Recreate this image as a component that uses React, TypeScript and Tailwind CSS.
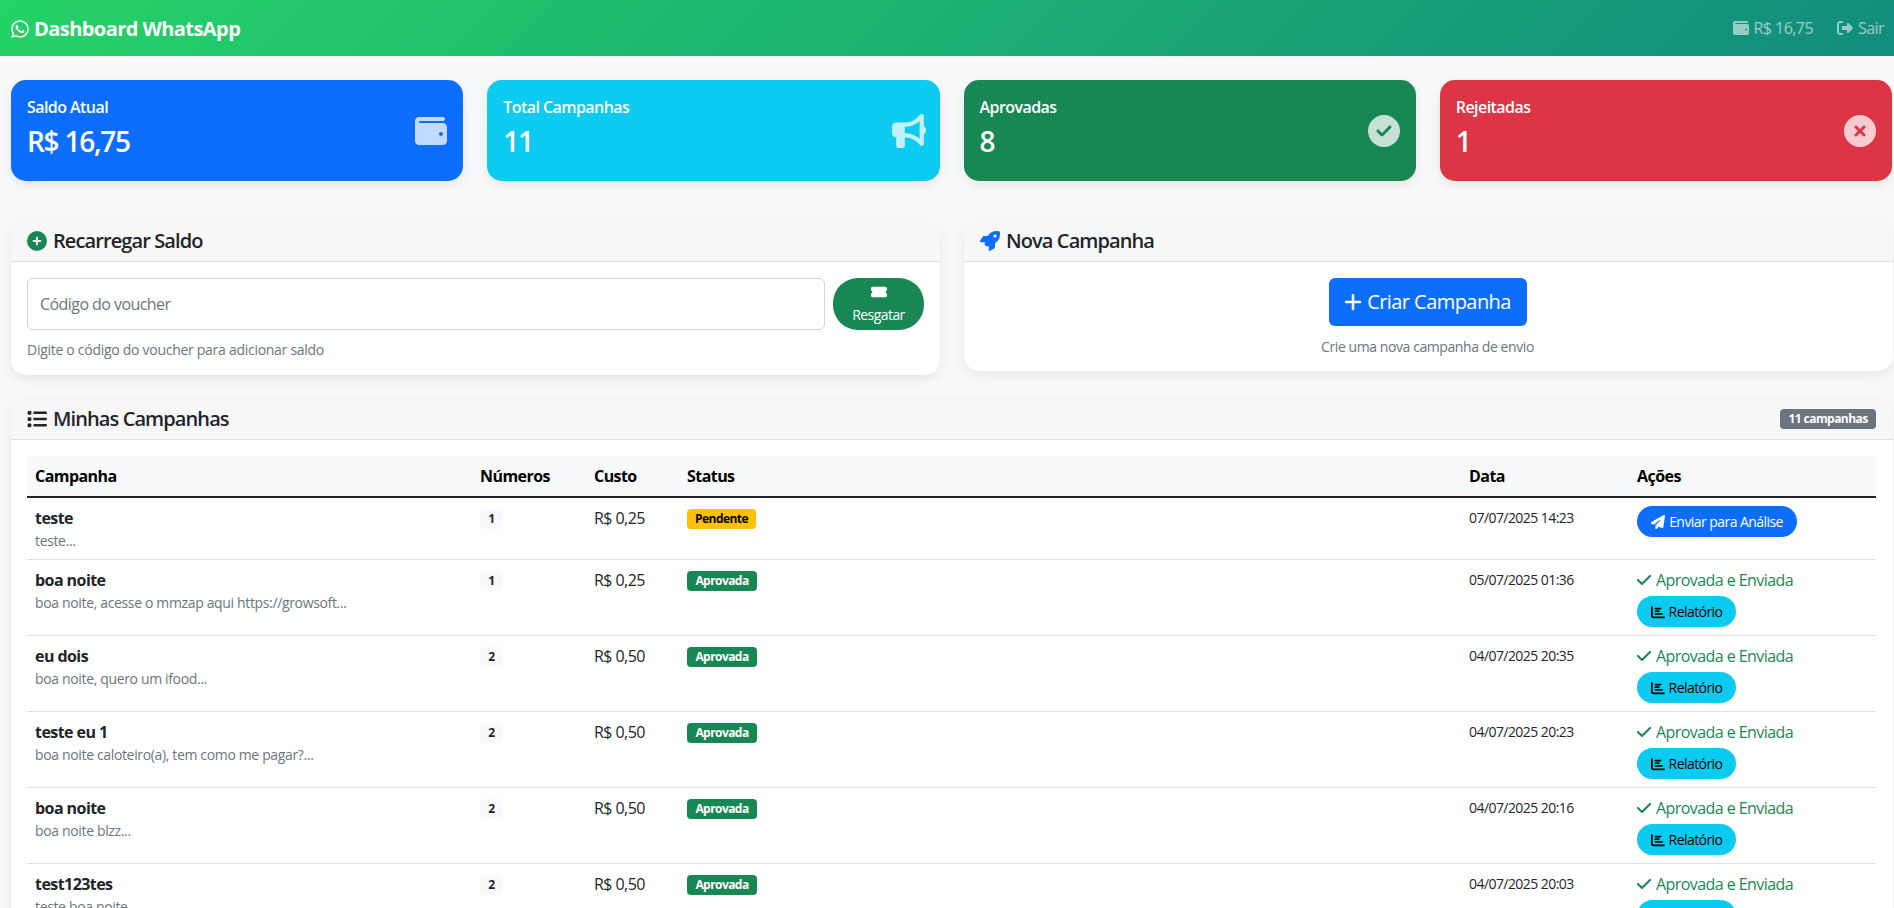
import {
    FaBullhorn,
    FaChartBar,
    FaCheck,
    FaCircleCheck,
    FaCirclePlus,
    FaCircleXmark,
    FaList,
    FaPaperPlane,
    FaPlus,
    FaRightFromBracket,
    FaRocket,
    FaTicketSimple,
    FaWallet,
    FaWhatsapp,
} from 'react-icons/fa6';

const stats = [
    { label: 'Saldo Atual', value: 'R$ 16,75', icon: FaWallet, bg: 'bg-[#0d6efd]', size: 'w-8 h-8' },
    { label: 'Total Campanhas', value: '11', icon: FaBullhorn, bg: 'bg-[#0dcaf0]', size: 'w-[34px] h-[34px] -mr-[2px]' },
    { label: 'Aprovadas', value: '8', icon: FaCircleCheck, bg: 'bg-[#198754]', size: 'w-8 h-8' },
    { label: 'Rejeitadas', value: '1', icon: FaCircleXmark, bg: 'bg-[#dc3545]', size: 'w-8 h-8' },
];

const campaigns = [
    { name: 'teste', text: 'teste...', count: 1, cost: 'R$ 0,25', pending: true, date: '07/07/2025 14:23' },
    { name: 'boa noite', text: 'boa noite, acesse o mmzap aqui https://growsoft...', count: 1, cost: 'R$ 0,25', pending: false, date: '05/07/2025 01:36' },
    { name: 'eu dois', text: 'boa noite, quero um ifood...', count: 2, cost: 'R$ 0,50', pending: false, date: '04/07/2025 20:35' },
    { name: 'teste eu 1', text: 'boa noite caloteiro(a), tem como me pagar?...', count: 2, cost: 'R$ 0,50', pending: false, date: '04/07/2025 20:23' },
    { name: 'boa noite', text: 'boa noite blzz...', count: 2, cost: 'R$ 0,50', pending: false, date: '04/07/2025 20:16' },
    { name: 'test123tes', text: 'teste boa noite...', count: 2, cost: 'R$ 0,50', pending: false, date: '04/07/2025 20:03' },
];

const headers = [
    { label: 'Campanha', width: 'w-[445px]' },
    { label: 'Números', width: 'w-[114px]' },
    { label: 'Custo', width: 'w-[93px]' },
    { label: 'Status', width: 'w-[782px]' },
    { label: 'Data', width: 'w-[168px]' },
    { label: 'Ações', width: 'w-[247px]' },
];

export default function App() {
    return (
        <div className="h-[908px] overflow-hidden bg-[#f8f9fa] text-[#212529] text-base leading-6 font-['Open_Sans',sans-serif] tracking-[-0.035em]">
            <nav className="h-14 flex items-center justify-between pl-[11px] pr-[10px] bg-[linear-gradient(135deg,#25d366,#128c7e)]">
                <div className="mt-px flex items-center gap-[5px] text-white text-xl font-bold">
                    <FaWhatsapp className="w-[18px] h-5" />
                    Dashboard WhatsApp
                </div>
                <div className="flex items-center gap-6 text-white/55">
                    <span className="flex items-center gap-[5px]">
                        <FaWallet className="w-4 h-4" />
                        R$ 16,75
                    </span>
                    <span className="flex items-center gap-[5px]">
                        <FaRightFromBracket className="w-4 h-4" />
                        Sair
                    </span>
                </div>
            </nav>

            <main className="pl-[11px] pr-px">
                <section className="grid grid-cols-4 gap-6 mt-6 mr-px">
                    {stats.map((s) => (
                        <div key={s.label} className={`${s.bg} h-[101px] rounded-[15px] p-4 flex items-center justify-between text-white shadow-[0_4px_12px_rgba(0,0,0,0.08)]`}>
                            <div className="self-start -mt-px">
                                <div className="font-semibold">{s.label}</div>
                                <div className="text-[28px] leading-[34px] font-semibold mt-[5px] tracking-[-0.045em]">{s.value}</div>
                            </div>
                            <s.icon className={`${s.size} opacity-75`} />
                        </div>
                    ))}
                </section>

                <section className="grid grid-cols-2 gap-6 mt-10 items-start">
                    <div className="bg-white rounded-[15px] shadow-[0_4px_12px_rgba(0,0,0,0.08)] overflow-hidden">
                        <div className="h-[41px] flex items-center gap-[6px] px-4 bg-[#f7f7f7] border-b border-[#dfdfdf] text-xl font-semibold tracking-[-0.045em]">
                            <FaCirclePlus className="w-5 h-5 text-[#198754]" />
                            Recarregar Saldo
                        </div>
                        <div className="pt-4 px-4 pb-[15px]">
                            <div className="flex gap-2">
                                <input
                                    className="flex-1 h-[52px] px-3 border border-[#ced4da] rounded-md outline-none placeholder:text-[#6c757d]"
                                    placeholder="Código do voucher"
                                    readOnly
                                />
                                <button className="w-[91px] h-[52px] rounded-[25px] bg-[#198754] text-white text-sm flex flex-col items-center justify-center gap-[5px]">
                                    <FaTicketSimple className="w-4 h-4" />
                                    Resgatar
                                </button>
                            </div>
                            <p className="mt-[9px] text-sm leading-[21px] text-[#6c757d] tracking-[-0.02em]">Digite o código do voucher para adicionar saldo</p>
                        </div>
                    </div>

                    <div className="bg-white rounded-[15px] shadow-[0_4px_12px_rgba(0,0,0,0.08)] overflow-hidden">
                        <div className="h-[41px] flex items-center gap-[6px] px-4 bg-[#f7f7f7] border-b border-[#dfdfdf] text-xl font-semibold tracking-[-0.045em]">
                            <FaRocket className="w-5 h-5 text-[#0d6efd]" />
                            Nova Campanha
                        </div>
                        <div className="pt-4 pl-4 pr-[18px] pb-[14px] flex flex-col items-center">
                            <button className="h-12 w-[198px] rounded-md bg-[#0d6efd] text-white text-xl flex items-center justify-center gap-[5px]">
                                <FaPlus className="w-[18px] h-5" />
                                Criar Campanha
                            </button>
                            <p className="mt-[10px] text-sm leading-[21px] text-[#6c757d] tracking-[-0.03em]">Crie uma nova campanha de envio</p>
                        </div>
                    </div>
                </section>

                <section className="mt-6 bg-white rounded-t-[15px] shadow-[0_4px_12px_rgba(0,0,0,0.08)] overflow-hidden">
                    <div className="h-[41px] flex items-center justify-between pl-4 pr-[17px] bg-[#f7f7f7] border-b border-[#dfdfdf]">
                        <div className="flex items-center gap-[6px] text-xl font-semibold tracking-[-0.045em]">
                            <FaList className="w-5 h-5" />
                            Minhas Campanhas
                        </div>
                        <span className="h-5 w-24 rounded-[4px] bg-[#6c757d] text-white text-xs font-bold flex items-center justify-center">
                            11 campanhas
                        </span>
                    </div>
                    <div className="pt-4 pl-4 pr-[17px]">
                        <table className="w-full table-fixed border-separate border-spacing-0">
                            <thead>
                                <tr className="text-black">
                                    {headers.map((h) => (
                                        <th key={h.label} className={`${h.width} h-[42px] px-2 bg-[#f8f9fa] border-b-2 border-[#212529] text-left font-bold`}>
                                            {h.label}
                                        </th>
                                    ))}
                                </tr>
                            </thead>
                            <tbody>
                                {campaigns.map((c) => (
                                    <tr key={c.date} className="align-top">
                                        <td className="p-2 border-b border-[#dee2e6]">
                                            <div className="font-bold">{c.name}</div>
                                            <div className="text-sm leading-[21px] text-[#6c757d] tracking-[-0.025em]">{c.text}</div>
                                        </td>
                                        <td className="p-2 border-b border-[#dee2e6]">
                                            <span className="mt-[3px] w-[23px] h-5 rounded-[4px] bg-[#f8f9fa] text-xs font-bold flex items-center justify-center">
                                                {c.count}
                                            </span>
                                        </td>
                                        <td className="p-2 border-b border-[#dee2e6]">{c.cost}</td>
                                        <td className="p-2 border-b border-[#dee2e6]">
                                            {c.pending ? (
                                                <span className="mt-[3px] w-[69px] h-5 rounded-[4px] bg-[#ffc107] text-black text-xs font-bold flex items-center justify-center">
                                                    Pendente
                                                </span>
                                            ) : (
                                                <span className="mt-[3px] w-[70px] h-5 rounded-[4px] bg-[#198754] text-white text-xs font-bold flex items-center justify-center">
                                                    Aprovada
                                                </span>
                                            )}
                                        </td>
                                        <td className="p-2 border-b border-[#dee2e6] text-sm leading-6">{c.date}</td>
                                        <td className="p-2 border-b border-[#dee2e6]">
                                            {c.pending ? (
                                                <button className="h-[31px] w-40 rounded-full bg-[#0d6efd] text-white text-sm flex items-center justify-center gap-1">
                                                    <FaPaperPlane className="w-[14px] h-[14px]" />
                                                    Enviar para Análise
                                                </button>
                                            ) : (
                                                <>
                                                    <div className="flex items-center gap-[5px] text-[#198754]">
                                                        <FaCheck className="w-[14px] h-4" />
                                                        Aprovada e Enviada
                                                    </div>
                                                    <button className="mt-1 h-[31px] w-[99px] rounded-full bg-[#0dcaf0] text-black text-sm flex items-center justify-center gap-1">
                                                        <FaChartBar className="w-[14px] h-[14px]" />
                                                        Relatório
                                                    </button>
                                                </>
                                            )}
                                        </td>
                                    </tr>
                                ))}
                            </tbody>
                        </table>
                    </div>
                </section>
            </main>
        </div>
    );
}
